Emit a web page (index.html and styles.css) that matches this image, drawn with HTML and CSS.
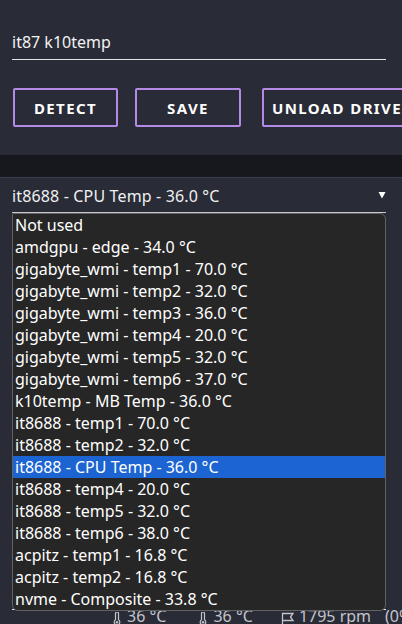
FILE: index.html
```html
<!DOCTYPE html>
<html>
<head>
<meta charset="utf-8">
<link rel="stylesheet" href="styles.css">
</head>
<body>
<div class="top">
  <div class="textfield">it87 k10temp</div>
  <div class="buttons">
    <div class="btn btn-detect">DETECT</div>
    <div class="btn btn-save">SAVE</div>
    <div class="btn btn-unload">UNLOAD DRIVER</div>
  </div>
</div>
<div class="band"></div>
<div class="selectwrap">
  <div class="select">
    <span class="select-value">it8688 - CPU Temp - 36.0 °C</span>
    <svg class="arrow" width="8" height="8" viewBox="0 0 8 8"><polygon points="0.5,1 7.5,1 4,7.5" fill="#ffffff"/></svg>
  </div>
  <div class="behind"></div>
  <div class="status">
    <span class="stat stat-1">
      <svg class="therm" width="8" height="14" viewBox="0 0 8 14"><path d="M2.5 1.5 a1.5 1.5 0 0 1 3 0 v6.3 a2.8 2.8 0 1 1 -3 0 z" fill="none" stroke="#c4c4cb" stroke-width="1.2"/><circle cx="4" cy="10.3" r="1.2" fill="#c4c4cb"/></svg>
      36 °C
    </span>
    <span class="stat stat-2">
      <svg class="therm" width="8" height="14" viewBox="0 0 8 14"><path d="M2.5 1.5 a1.5 1.5 0 0 1 3 0 v6.3 a2.8 2.8 0 1 1 -3 0 z" fill="none" stroke="#c4c4cb" stroke-width="1.2"/><circle cx="4" cy="10.3" r="1.2" fill="#c4c4cb"/></svg>
      36 °C
    </span>
    <span class="stat stat-3">
      <svg class="flag" width="14" height="14" viewBox="0 0 14 14"><path d="M1.5 13.5 V1.5 H12 L9.5 5 L12 8.5 H1.5" fill="none" stroke="#c4c4cb" stroke-width="1.3"/></svg>
      1795 rpm
    </span>
    <span class="stat stat-4">(0%)</span>
  </div>
  <ul class="dropdown">
    <li class="opt">Not used</li>
    <li class="opt">amdgpu - edge - 34.0 °C</li>
    <li class="opt">gigabyte_wmi - temp1 - 70.0 °C</li>
    <li class="opt">gigabyte_wmi - temp2 - 32.0 °C</li>
    <li class="opt">gigabyte_wmi - temp3 - 36.0 °C</li>
    <li class="opt">gigabyte_wmi - temp4 - 20.0 °C</li>
    <li class="opt">gigabyte_wmi - temp5 - 32.0 °C</li>
    <li class="opt">gigabyte_wmi - temp6 - 37.0 °C</li>
    <li class="opt">k10temp - MB Temp - 36.0 °C</li>
    <li class="opt">it8688 - temp1 - 70.0 °C</li>
    <li class="opt">it8688 - temp2 - 32.0 °C</li>
    <li class="opt selected">it8688 - CPU Temp - 36.0 °C</li>
    <li class="opt">it8688 - temp4 - 20.0 °C</li>
    <li class="opt">it8688 - temp5 - 32.0 °C</li>
    <li class="opt">it8688 - temp6 - 38.0 °C</li>
    <li class="opt">acpitz - temp1 - 16.8 °C</li>
    <li class="opt">acpitz - temp2 - 16.8 °C</li>
    <li class="opt">nvme - Composite - 33.8 °C</li>
  </ul>
</div>
</body>
</html>
```

FILE: styles.css
```css
html, body {
  margin: 0;
  padding: 0;
}
body {
  width: 402px;
  height: 624px;
  overflow: hidden;
  background: #292b37;
  color: #f0f0f0;
  font-family: "Noto Sans", sans-serif;
  font-size: 16px;
}
.top {
  padding: 31px 0 0 12px;
}
.textfield {
  width: 374px;
  height: 22px;
  line-height: 22px;
  padding-bottom: 6px;
  border-bottom: 1px solid #e4e4e4;
  color: #f2f2f2;
}
.buttons {
  display: flex;
  margin-top: 28px;
  white-space: nowrap;
}
.btn {
  box-sizing: border-box;
  flex-shrink: 0;
  height: 39px;
  border: 2px solid #b48ae6;
  border-radius: 2px;
  display: flex;
  align-items: center;
  justify-content: center;
  font-weight: 700;
  font-size: 15px;
  letter-spacing: 1.4px;
  color: #ffffff;
  padding: 0 8px;
}
.btn-detect { width: 105px; margin-left: 1px; }
.btn-save { width: 106px; margin-left: 17px; }
.btn-unload { margin-left: 21px; padding: 0 8px 0 8px; }
.band {
  margin-top: 28px;
  height: 22px;
  background: #17181d;
  border-bottom: 1px solid #3a3c47;
}
.selectwrap {
  position: relative;
  padding: 0 12px;
}
.select {
  height: 22px;
  line-height: 22px;
  padding: 7px 0 5px 0;
  border-bottom: 1px solid #c9c9c9;
  display: flex;
  justify-content: space-between;
  align-items: center;
  width: 374px;
}
.select-value {
  color: #f0f0f0;
  letter-spacing: 0.15px;
}
.arrow {
  margin-top: -3px;
}
.behind {
  height: 396px;
  border-bottom: 1px solid #e8e8e8;
  width: 374px;
}
.status {
  display: flex;
  line-height: 13px;
  color: #c4c4cb;
  white-space: nowrap;
  padding-left: 101px;
}
.stat {
  display: flex;
  align-items: flex-start;
  gap: 6px;
}
.therm { margin-top: 2px; }
.flag { margin-top: 2px; }
.stat-2 { margin-left: 33px; }
.stat-3 { margin-left: 28px; gap: 4px; }
.stat-4 { margin-left: 14px; }
.dropdown {
  position: absolute;
  top: 35px;
  left: 12px;
  width: 372px;
  margin: 0;
  padding: 0;
  list-style: none;
  background: #262626;
  border: 1px solid #626262;
  border-radius: 2px 6px 6px 6px;
  overflow: hidden;
}
.opt {
  height: 22px;
  line-height: 22px;
  padding-left: 2px;
  color: #ffffff;
  white-space: nowrap;
}
.opt.selected {
  background: #1b64d2;
}
```
